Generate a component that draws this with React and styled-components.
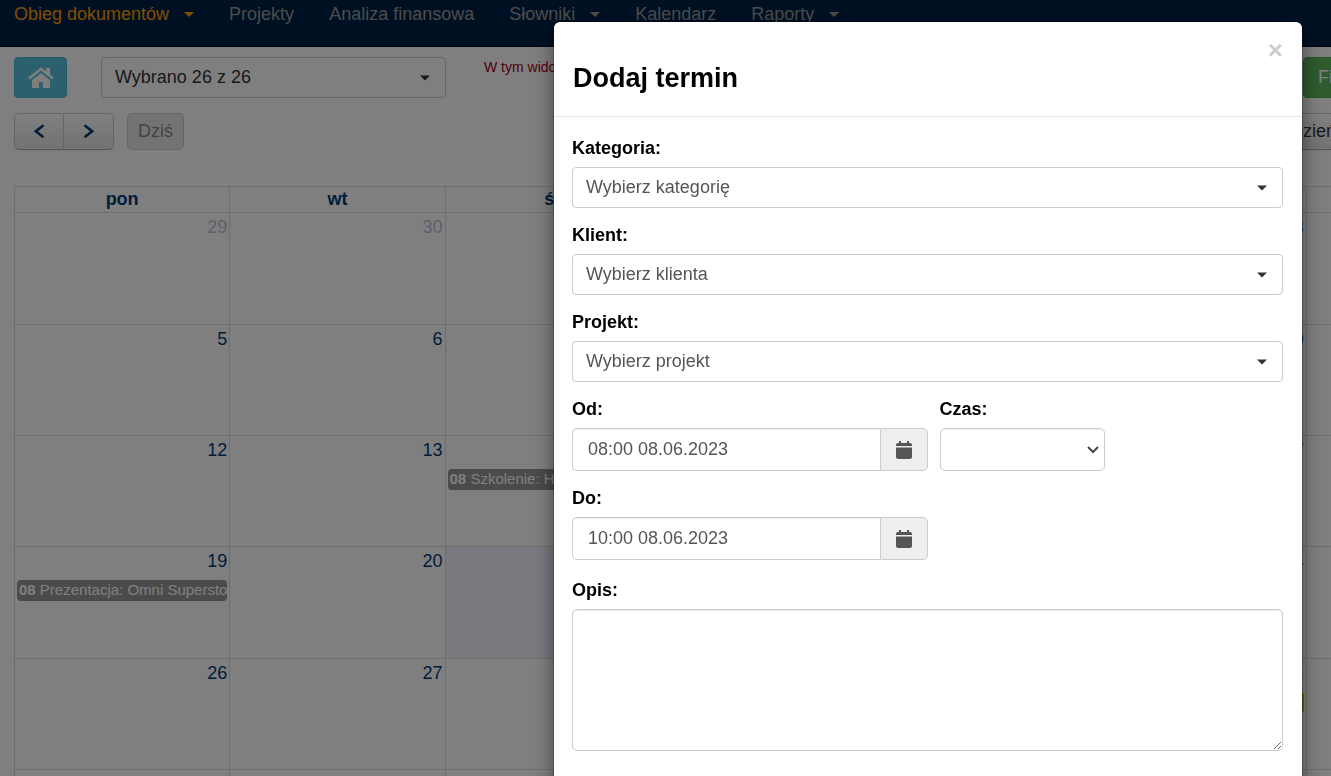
import React from 'react';
import styled, { createGlobalStyle, css } from 'styled-components';

const GlobalStyle = createGlobalStyle`
  * { box-sizing: border-box; }
  body {
    margin: 0;
    background: #fff;
    color: #333;
    font: 18px/25px "Liberation Sans", Arial, sans-serif;
  }
  button, input, select, textarea { font: inherit; color: inherit; margin: 0; }
`;

const Page = styled.div`
  height: 100vh;
  overflow: hidden;
`;

const Navbar = styled.nav`
  display: flex;
  gap: 35px;
  height: 47px;
  padding: 2px 14px;
  background: #002147;
  border-bottom: 1px solid #000b18;
`;

const Caret = styled.span`
  width: 0;
  height: 0;
  border: 5px solid transparent;
  border-top-color: currentColor;
  border-bottom-width: 0;
`;

const NavLink = styled.a`
  display: flex;
  align-items: center;
  gap: 15px;
  height: 25px;
  white-space: nowrap;
  text-decoration: none;
  color: ${(p) => (p.$active ? '#ff9c00' : '#999')};
`;

const Toolbar = styled.div`
  display: flex;
  padding: ${(p) => p.$pad};
`;

const HomeButton = styled.button`
  display: flex;
  align-items: center;
  justify-content: center;
  width: 53px;
  height: 41px;
  margin-right: 34px;
  padding: 0;
  border: 1px solid #46b8da;
  border-radius: 4px;
  background: #5bc0de;
  color: #fff;
`;

const SelectWrap = styled.div`
  position: relative;
  display: flex;
  width: ${(p) => p.$width || '100%'};
  flex-shrink: 0;

  > span, > svg {
    position: absolute;
    right: ${(p) => (p.$tall ? '6px' : '16px')};
    top: 50%;
    transform: translateY(-50%);
    pointer-events: none;
    color: #333;
  }
`;

const Select = styled.select`
  appearance: none;
  width: 100%;
  height: ${(p) => (p.$tall ? '43px' : '41px')};
  padding: 0 40px 0 13px;
  border: 1px solid #ccc;
  border-radius: ${(p) => (p.$tall ? '5px' : '4px')};
  background: #fff;
  ${(p) => p.$tall && css`box-shadow: inset 0 1px 1px rgba(0, 0, 0, 0.075);`}
`;

const Warning = styled.p`
  margin: 0 0 0 38px;
  font-size: 14px;
  line-height: 20px;
  color: #a00018;
  white-space: nowrap;
`;

const RightEdge = styled.div`
  flex: 0 0 ${(p) => p.$visible};
  min-width: 0;
  margin-left: auto;
`;

const FilterButton = styled.button`
  height: 41px;
  padding: 0 14px;
  border: 1px solid #4cae4c;
  border-radius: 4px;
  background: #5cb85c;
  color: #fff;
`;

const ButtonGroup = styled.div`
  display: flex;
  margin-right: 13px;
`;

const CalButton = styled.button`
  display: flex;
  align-items: center;
  justify-content: center;
  min-width: ${(p) => (p.$icon ? '50px' : '57px')};
  height: 37px;
  padding: 0 10px;
  border: 1px solid #ccc;
  border-bottom-color: #aaa;
  border-radius: 5px;
  background: linear-gradient(#fff, #e6e6e6);
  box-shadow: 0 1px 2px rgba(0, 0, 0, 0.05);
  color: ${(p) => (p.$icon ? '#003a78' : '#333')};

  ${ButtonGroup} &:first-child { border-radius: 5px 0 0 5px; }
  ${ButtonGroup} &:last-child { border-radius: 0 5px 5px 0; border-left-width: 0; }

  &:disabled {
    background: #e6e6e6;
    border-color: #ccc;
    box-shadow: none;
    color: #888;
  }
`;

const CalendarWrap = styled.div`
  padding: 36px 0 0 14px;
`;

const Calendar = styled.table`
  width: 114.5%;
  table-layout: fixed;
  border-collapse: collapse;
  color: #003a78;

  th, td { border: 1px solid #ddd; }
  th { height: 26px; padding: 0; line-height: 25px; }
`;

const Week = styled.tr`
  height: 111px;
  &:first-child, &:nth-child(4) { height: 112px; }
`;

const Day = styled.td`
  padding: 2px;
  vertical-align: top;
  background: ${(p) => (p.$today ? '#f4f2ff' : 'transparent')};
`;

const DayNumber = styled.div`
  text-align: right;
  opacity: ${(p) => (p.$other ? 0.3 : 1)};
`;

const Event = styled.a`
  display: block;
  height: 21px;
  margin-top: 6px;
  padding: 0 2px;
  overflow: hidden;
  white-space: nowrap;
  border-radius: 4px;
  background: ${(p) => p.$color};
  color: #fff;
  font-size: 15px;
  line-height: 20px;
  text-decoration: none;
`;

const Backdrop = styled.div`
  position: fixed;
  inset: 0;
  display: flex;
  align-items: flex-start;
  justify-content: flex-end;
  padding: 22px 29px 0 14px;
  overflow: hidden;
  background: rgba(0, 0, 0, 0.5);
`;

const Modal = styled.section`
  width: 100%;
  max-width: 748px;
  padding-bottom: 60px;
  border-radius: 6px;
  background: #fff;
  box-shadow: 0 0 0 1px rgba(0, 0, 0, 0.2), 0 6px 19px rgba(0, 0, 0, 0.5);
  color: #000;
`;

const ModalHeader = styled.header`
  display: flex;
  align-items: flex-start;
  justify-content: space-between;
  height: 95px;
  padding: 16px 19px 0;
  border-bottom: 1px solid #e5e5e5;
`;

const Title = styled.h2`
  margin: 25px 0 0;
  font-size: 27px;
  line-height: 30px;
`;

const Close = styled.button`
  padding: 0;
  border: 0;
  background: none;
  font-size: 26px;
  font-weight: bold;
  line-height: 24px;
  color: #ccc;
`;

const Form = styled.form`
  display: flex;
  flex-direction: column;
  gap: 15px;
  padding: 19px 19px 0 18px;
`;

const Field = styled.div`
  width: ${(p) => p.$width || '100%'};
  color: #555;
`;

const Label = styled.label`
  display: block;
  margin-bottom: 6px;
  font-weight: bold;
  color: #000;
`;

const FieldRow = styled.div`
  display: flex;
  gap: 12px;
  margin-bottom: ${(p) => (p.$last ? '3px' : '0')};
`;

const InputGroup = styled.div`
  display: flex;
  height: 43px;
`;

const DateInput = styled.input`
  flex: 1;
  min-width: 0;
  padding: 0 15px;
  border: 1px solid #ccc;
  border-right: 0;
  border-radius: 5px 0 0 5px;
  box-shadow: inset 0 1px 1px rgba(0, 0, 0, 0.075);
`;

const Addon = styled.button`
  display: flex;
  align-items: center;
  justify-content: center;
  width: 48px;
  padding: 0;
  border: 1px solid #ccc;
  border-radius: 0 5px 5px 0;
  background: #eee;
`;

const TextArea = styled.textarea`
  display: block;
  width: 100%;
  height: 142px;
  padding: 8px 15px;
  border: 1px solid #ccc;
  border-radius: 5px;
  box-shadow: inset 0 1px 1px rgba(0, 0, 0, 0.075);
  resize: vertical;
`;

const NAV = [
  { text: 'Obieg dokumentów', caret: true, active: true },
  { text: 'Projekty' },
  { text: 'Analiza finansowa' },
  { text: 'Słowniki', caret: true },
  { text: 'Kalendarz' },
  { text: 'Raporty', caret: true },
];

const DAYS = ['pon', 'wt', 'śr', 'czw', 'pt', 'sob', ''];

const WEEKS = [
  [29, 30, 31, 1, 2, 3, ''],
  [5, 6, 7, 8, 9, 10, ''],
  [12, 13, 14, 15, 16, 17, ''],
  [19, 20, 21, 22, 23, 24, ''],
  [26, 27, 28, 29, 30, 1, ''],
  ['', '', '', '', '', '', ''],
];

const EVENTS = {
  '2-2': { hour: '08', text: 'Szkolenie: H', color: '#969696' },
  '3-0': { hour: '08', text: 'Prezentacja: Omni Supersto', color: '#969696' },
  '4-5': { hour: '', text: '', color: '#c4c414' },
};

const isOtherMonth = (week, day) =>
  (week === 0 && day > 7) || (week >= 4 && day < 20);

function HomeIcon() {
  return (
    <svg width="26" height="21" viewBox="0 0 26 21" aria-hidden="true">
      <path d="M18 1h4v7h-4z" fill="currentColor" />
      <path d="M1 11.5 13 1.8l12 9.7" fill="none" stroke="currentColor" strokeWidth="2.6" />
      <path d="M13 6 4 13.2V20q0 1 1 1h6v-6h4v6h6q1 0 1-1v-6.8z" fill="currentColor" />
    </svg>
  );
}

function Arrow({ left }) {
  return (
    <svg width="12" height="15" viewBox="0 0 12 15" fill="none" stroke="currentColor" strokeWidth="2.6" aria-hidden="true">
      <path d={left ? 'M10.5 1.2 2.8 7.2l7.7 6' : 'M1.5 1.2l7.7 6-7.7 6'} />
    </svg>
  );
}

function CalendarIcon() {
  return (
    <svg width="16" height="18" viewBox="0 0 16 18" fill="#555" aria-hidden="true">
      <path d="M0 5V4q0-2 2-2h1V0h2v2h6V0h2v2h1q2 0 2 2v1z" />
      <path d="M0 6.5h16V16q0 2-2 2H2q-2 0-2-2z" />
    </svg>
  );
}

function Picker({ id, label, text }) {
  return (
    <Field>
      <Label htmlFor={id}>{label}</Label>
      <SelectWrap>
        <Select id={id}><option>{text}</option></Select>
        <Caret />
      </SelectWrap>
    </Field>
  );
}

function DateField({ id, label, value }) {
  return (
    <Field $width="50%">
      <Label htmlFor={id}>{label}</Label>
      <InputGroup>
        <DateInput id={id} defaultValue={value} />
        <Addon type="button" aria-label={`${label} kalendarz`}><CalendarIcon /></Addon>
      </InputGroup>
    </Field>
  );
}

export default function App() {
  return (
    <>
      <GlobalStyle />
      <Page>
        <Navbar>
          {NAV.map((n) => (
            <NavLink key={n.text} href="#" $active={n.active}>
              {n.text}
              {n.caret && <Caret />}
            </NavLink>
          ))}
        </Navbar>
        <Toolbar $pad="10px 0 0 14px">
          <HomeButton aria-label="Start"><HomeIcon /></HomeButton>
          <SelectWrap $width="345px">
            <Select aria-label="Wybrano"><option>Wybrano 26 z 26</option></Select>
            <Caret />
          </SelectWrap>
          <Warning>W tym widoku</Warning>
          <RightEdge $visible="28px"><FilterButton>Filtruj</FilterButton></RightEdge>
        </Toolbar>
        <Toolbar $pad="15px 0 0 14px">
          <ButtonGroup>
            <CalButton $icon aria-label="Poprzedni"><Arrow left /></CalButton>
            <CalButton $icon aria-label="Następny"><Arrow /></CalButton>
          </ButtonGroup>
          <CalButton disabled>Dziś</CalButton>
          <RightEdge $visible="63px"><CalButton>tydzień</CalButton></RightEdge>
        </Toolbar>
        <CalendarWrap>
          <Calendar>
            <thead>
              <tr>{DAYS.map((d) => <th key={d}>{d}</th>)}</tr>
            </thead>
            <tbody>
              {WEEKS.map((days, w) => (
                <Week key={w}>
                  {days.map((d, i) => {
                    const event = EVENTS[`${w}-${i}`];
                    return (
                      <Day key={i} $today={w === 3 && i === 2}>
                        <DayNumber $other={isOtherMonth(w, d)}>{d}</DayNumber>
                        {event && (
                          <Event href="#" $color={event.color}>
                            <b>{event.hour}</b> {event.text}
                          </Event>
                        )}
                      </Day>
                    );
                  })}
                </Week>
              ))}
            </tbody>
          </Calendar>
        </CalendarWrap>
      </Page>
      <Backdrop>
        <Modal role="dialog" aria-labelledby="modal-title">
          <ModalHeader>
            <Title id="modal-title">Dodaj termin</Title>
            <Close aria-label="Zamknij">×</Close>
          </ModalHeader>
          <Form>
            <Picker id="category" label="Kategoria:" text="Wybierz kategorię" />
            <Picker id="client" label="Klient:" text="Wybierz klienta" />
            <Picker id="project" label="Projekt:" text="Wybierz projekt" />
            <FieldRow>
              <DateField id="from" label="Od:" value="08:00 08.06.2023" />
              <Field $width="165px">
                <Label htmlFor="time">Czas:</Label>
                <SelectWrap $tall>
                  <Select id="time" $tall><option /></Select>
                  <svg width="12" height="8" viewBox="0 0 12 8" fill="none" stroke="#444" strokeWidth="2" aria-hidden="true">
                    <path d="M1 1l5 5 5-5" />
                  </svg>
                </SelectWrap>
              </Field>
            </FieldRow>
            <FieldRow $last>
              <DateField id="to" label="Do:" value="10:00 08.06.2023" />
            </FieldRow>
            <Field>
              <Label htmlFor="description">Opis:</Label>
              <TextArea id="description" />
            </Field>
          </Form>
        </Modal>
      </Backdrop>
    </>
  );
}
